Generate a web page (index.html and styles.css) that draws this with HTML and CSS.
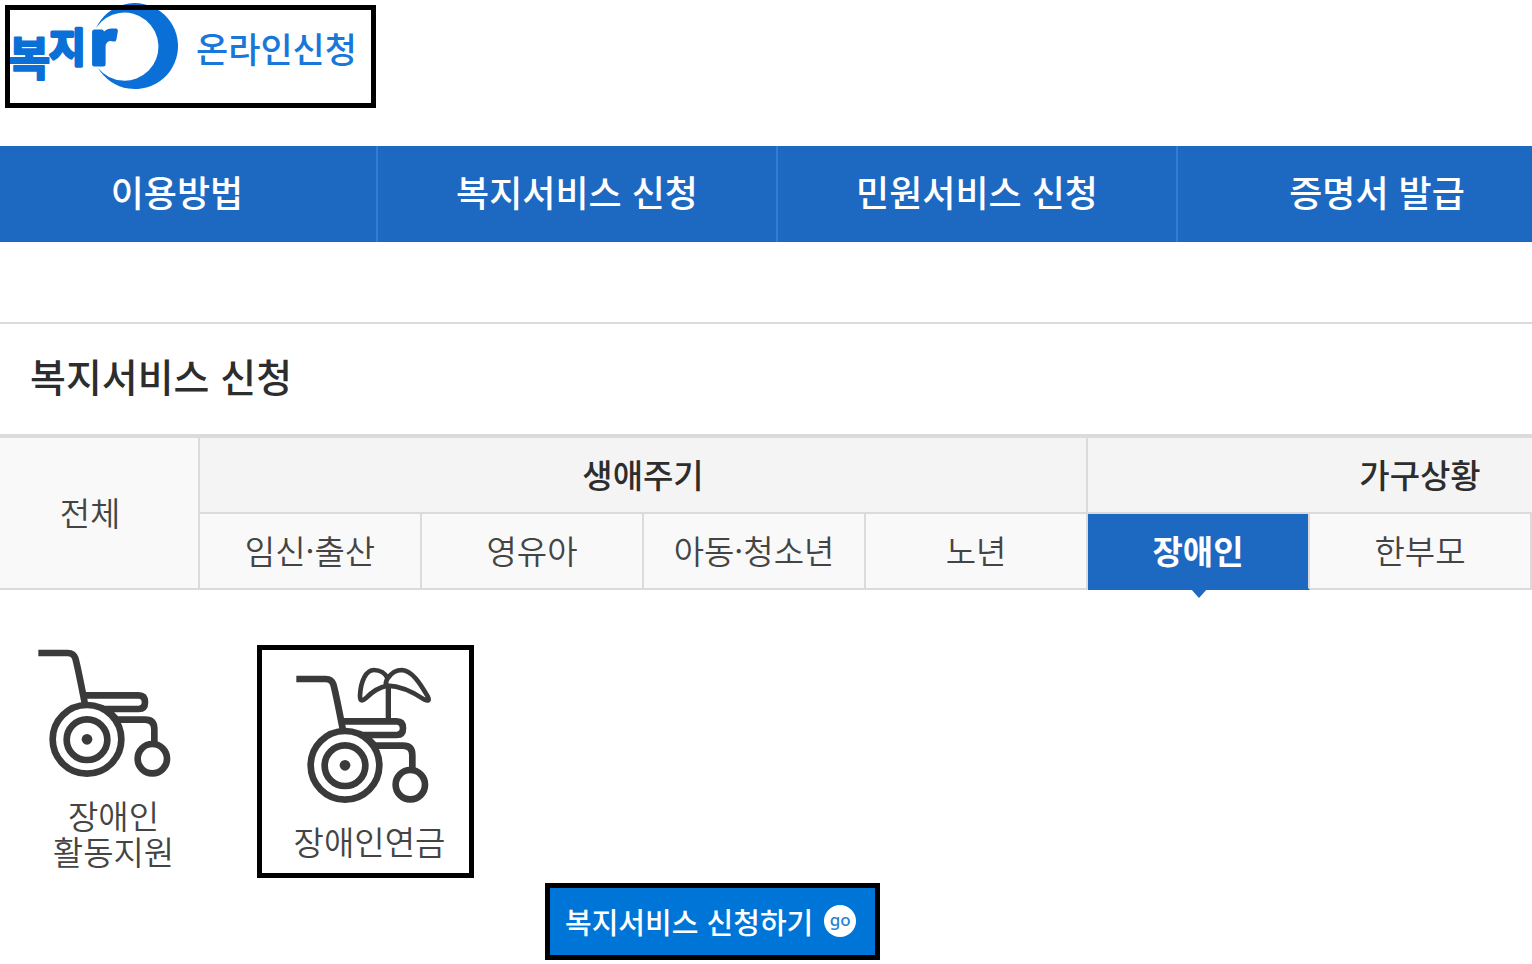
FILE: index.html
```html
<!DOCTYPE html>
<html lang="ko">
<head>
<meta charset="utf-8">
<meta name="viewport" content="width=device-width, initial-scale=1">
<title>복지로 온라인신청</title>
<link rel="stylesheet" href="styles.css">
</head>
<body>
<header class="header">
  <a class="logo" href="#">
    <svg class="logo-mark" viewBox="0 0 172 90" role="img" aria-label="복지로">
      <path class="moon" d="M86 24A43 43 0 1 1 88 64A34 34 0 1 0 86 24Z"/>
      <text class="mark-hangul mark-big" x="-2" y="71">복</text>
      <text class="mark-hangul" x="39" y="58">지</text>
      <text class="mark-latin" x="80" y="60">r</text>
    </svg>
    <span class="logo-text">온라인신청</span>
  </a>
</header>
<nav class="nav">
  <ul class="nav-list">
    <li><a href="#">이용방법</a></li>
    <li><a href="#">복지서비스 신청</a></li>
    <li><a href="#">민원서비스 신청</a></li>
    <li><a href="#">증명서 발급</a></li>
  </ul>
</nav>
<main class="main">
  <h1 class="title">복지서비스 신청</h1>
  <div class="tabs">
    <table class="tab-table">
      <colgroup><col class="col-all"><col span="7"></colgroup>
      <tbody>
        <tr>
          <td class="all" rowspan="2"><a href="#">전체</a></td>
          <th colspan="4" scope="colgroup">생애주기</th>
          <th colspan="3" scope="colgroup">가구상황</th>
        </tr>
        <tr>
          <td><a href="#">임신·출산</a></td>
          <td><a href="#">영유아</a></td>
          <td><a href="#">아동·청소년</a></td>
          <td><a href="#">노년</a></td>
          <td class="active"><a href="#" aria-current="true">장애인</a></td>
          <td><a href="#">한부모</a></td>
          <td></td>
        </tr>
      </tbody>
    </table>
  </div>
  <div class="services">
    <a class="service" href="#">
      <svg class="icon" viewBox="51 54 462 387" aria-hidden="true">
        <g id="wheelchair">
          <path d="M55 69H143Q161 69 166 85Q172 105 194 218M198 196H356Q375 196 375 217Q375 237 356 237H245M262 240L290 269H375Q403 269 403 298V338"/>
          <circle cx="201" cy="328" r="103"/>
          <circle cx="201" cy="329" r="61"/>
          <circle class="hub" cx="201" cy="328" r="16"/>
          <circle cx="397" cy="386" r="44"/>
        </g>
      </svg>
      <span>장애인<br>활동지원</span>
    </a>
    <a class="service boxed" href="#">
      <svg class="icon" viewBox="45 33 462 408" aria-hidden="true">
        <use href="#wheelchair"/>
        <path class="leaf" d="M328 89C301 94 281 109 263 127C251 138 246 134 246 119C248 75 264 42 288 42C306 42 322 52 329 67C340 51 354 42 372 42C402 44 426 82 449 121C456 136 450 136 438 130C396 102 364 90 328 89ZM329 67C324 74 322 81 325 89"/>
        <path class="trunk" d="M331 90V190"/>
      </svg>
      <span>장애인연금</span>
    </a>
  </div>
  <div class="actions">
    <button class="apply" type="button"><span>복지서비스 신청하기</span><span class="go">go</span></button>
  </div>
</main>
</body>
</html>
```
FILE: styles.css
```css
* {
  box-sizing: border-box;
}

body {
  margin: 0;
  background: #fff;
  color: #444;
  font-family: "Noto Sans CJK KR", sans-serif;
  font-size: 33px;
  font-weight: 350;
  line-height: 36px;
}

a {
  color: inherit;
  text-decoration: none;
}

.header {
  display: flex;
  align-items: flex-start;
  padding: 5px 5px 38px;
}

.logo {
  position: relative;
  display: flex;
  align-items: center;
  gap: 14px;
  padding: 0 19px 16px 5px;
  height: 103px;
  color: #1878d9;
}

.logo::after {
  content: "";
  position: absolute;
  inset: 0;
  border: 5px solid #000;
}

.logo-mark {
  width: 172px;
  height: 90px;
  overflow: visible;
}

.moon {
  fill: #0a6fd6;
}

.mark-hangul,
.mark-latin {
  fill: #0a6fd6;
  stroke: #0a6fd6;
  stroke-width: 3;
  stroke-linejoin: round;
  font-size: 40px;
  font-weight: 700;
}

.mark-big {
  stroke-width: 2;
  font-size: 46px;
}

.mark-latin {
  stroke-width: 5;
  font-size: 58px;
}

.logo-text {
  padding-bottom: 2px;
  font-size: 35px;
  font-weight: 500;
}

.nav {
  overflow: hidden;
  background: #1d69c2;
}

.nav-list {
  display: grid;
  grid-template-columns: repeat(4, 1fr);
  margin: 0 -46px 0 -22px;
  padding: 0;
  list-style: none;
}

.nav-list a {
  display: block;
  padding: 27px 0 33px;
  border-right: 2px solid #307dd5;
  color: #fff;
  font-size: 36px;
  font-weight: 500;
  text-align: center;
}

.main {
  margin-top: 80px;
  border-top: 2px solid #dbdbdb;
}

.title {
  margin: 0;
  padding: 26px 30px 34px;
  color: #2d2d2d;
  font-size: 39px;
  font-weight: 500;
  line-height: 50px;
}

.tabs {
  overflow: hidden;
  padding-bottom: 10px;
}

.tab-table {
  width: calc(100% + 222px);
  table-layout: fixed;
  border-spacing: 0;
  border-top: 4px solid #dbdbdb;
  text-align: center;
}

.col-all {
  width: 200px;
}

.tab-table th,
.tab-table td {
  height: 76px;
  padding: 0 0 2px;
  border: solid #dbdbdb;
  border-width: 0 2px 2px 0;
  background: #f9f9f9;
}

.tab-table th {
  background: #f4f4f4;
  color: #2d2d2d;
  font-weight: 500;
}

.tab-table .all {
  padding-right: 18px;
}

.tab-table td a {
  display: block;
}

.tab-table .active {
  position: relative;
  border-bottom-color: #1d69c2;
  background: #1d69c2;
  background-clip: padding-box;
  color: #fff;
  font-weight: 700;
}

.active::after {
  content: "";
  position: absolute;
  top: 100%;
  left: 50%;
  margin-left: -8px;
  border: solid transparent;
  border-width: 10px 9px 0;
  border-top-color: #1d69c2;
}

.services {
  display: flex;
  align-items: flex-start;
  gap: 30px;
  padding-top: 45px;
}

.service {
  display: flex;
  flex-direction: column;
  align-items: center;
  gap: 20px;
  width: 227px;
  padding-top: 3px;
  text-align: center;
}

.boxed {
  width: 217px;
  padding: 17px 0 14px 8px;
  border: 5px solid #000;
}

.icon {
  width: 154px;
  fill: none;
  stroke: #3a3a3a;
  stroke-width: 20;
}

.icon .hub {
  fill: #3a3a3a;
  stroke: none;
}

.icon .leaf {
  stroke-width: 14;
}

.icon .trunk {
  stroke-width: 16;
}

.actions {
  padding: 5px 0 4px 545px;
}

.apply {
  display: flex;
  align-items: center;
  gap: 11px;
  padding: 15px 19px 16px 15px;
  border: 5px solid #000;
  background: #0075d8;
  color: #fff;
  font-family: inherit;
  font-size: 29px;
  font-weight: 500;
  line-height: 36px;
  white-space: nowrap;
}

.go {
  width: 32px;
  height: 32px;
  border-radius: 50%;
  background: #fff;
  color: #2b7fd0;
  font-family: "Noto Sans", sans-serif;
  font-size: 17px;
  line-height: 30px;
}
```
